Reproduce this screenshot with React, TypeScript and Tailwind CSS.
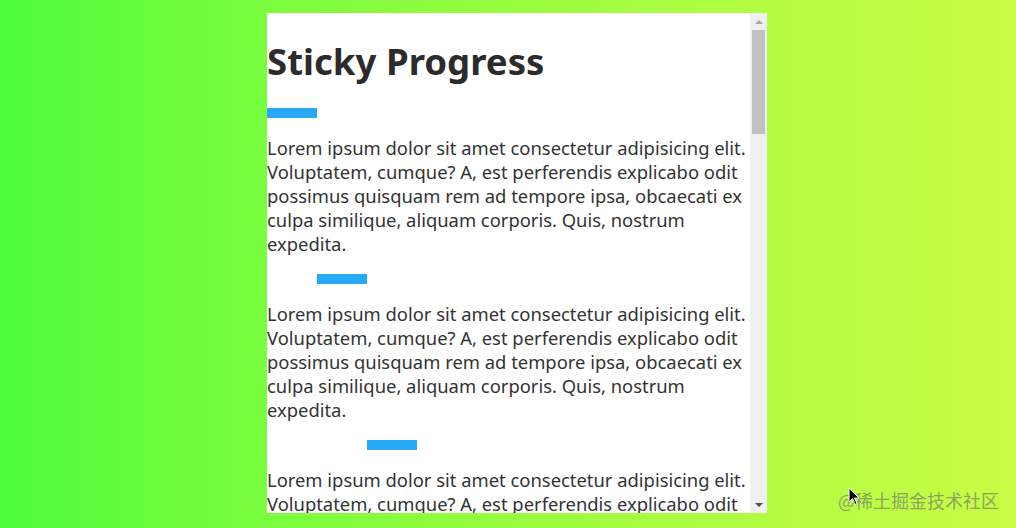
import React from "react";

const text =
  "Lorem ipsum dolor sit amet consectetur adipisicing elit. Voluptatem, cumque? A, est perferendis explicabo odit possimus quisquam rem ad tempore ipsa, obcaecati ex culpa similique, aliquam corporis. Quis, nostrum expedita.";

export default function App() {
  const bars = ["ml-0", "ml-[50px]", "ml-[100px]"];
  return (
    <div
      className="relative w-[1016px] h-[528px] overflow-hidden flex pl-[267px] pt-[13px] bg-gradient-to-r from-[#4cfc3c] to-[#cafc44]"
      style={{ fontFamily: '"Noto Sans", "Open Sans", sans-serif' }}
    >
      <div className="flex w-[500px] h-[500px] bg-white overflow-hidden">
        <div className="flex-1 overflow-hidden text-[#333]">
          <h1 className="text-[36.6px] font-bold leading-[48px] mt-[24px] mb-[23px] text-[#2b2b2b]">
            Sticky Progress
          </h1>
          {bars.map((b, i) => (
            <div key={i}>
              <div className={`h-[10px] w-[50px] bg-[#29a8f6] ${b}`} />
              <p className="text-[18.4px] leading-[24px] my-[18px]">{text}</p>
            </div>
          ))}
        </div>
        <div className="w-[17px] h-full bg-[#f0f0f0] flex flex-col items-center">
          <div className="h-[17px] w-full flex items-center justify-center">
            <div className="w-0 h-0 border-l-[4px] border-r-[4px] border-b-[4px] border-l-transparent border-r-transparent border-b-[#a3a3a3]" />
          </div>
          <div className="w-[13px] h-[104px] bg-[#c1c1c1]" />
          <div className="flex-1" />
          <div className="h-[17px] w-full flex items-center justify-center">
            <div className="w-0 h-0 border-l-[4px] border-r-[4px] border-t-[4px] border-l-transparent border-r-transparent border-t-[#505050]" />
          </div>
        </div>
      </div>
      <div
        className="absolute left-[838px] top-[487px] text-[18px] leading-[26px] text-[#7a8a6a]/80"
        style={{ fontFamily: '"Noto Sans CJK SC", sans-serif' }}
      >
        @稀土掘金技术社区
      </div>
      <svg className="absolute left-[848px] top-[487px]" width="12" height="19" viewBox="0 0 12 19">
        <path d="M1 1 L1 15 L4.5 11.5 L7 17.5 L9 16.6 L6.6 11 L11 11 Z" fill="#000" stroke="#fff" strokeWidth="1" />
      </svg>
    </div>
  );
}
